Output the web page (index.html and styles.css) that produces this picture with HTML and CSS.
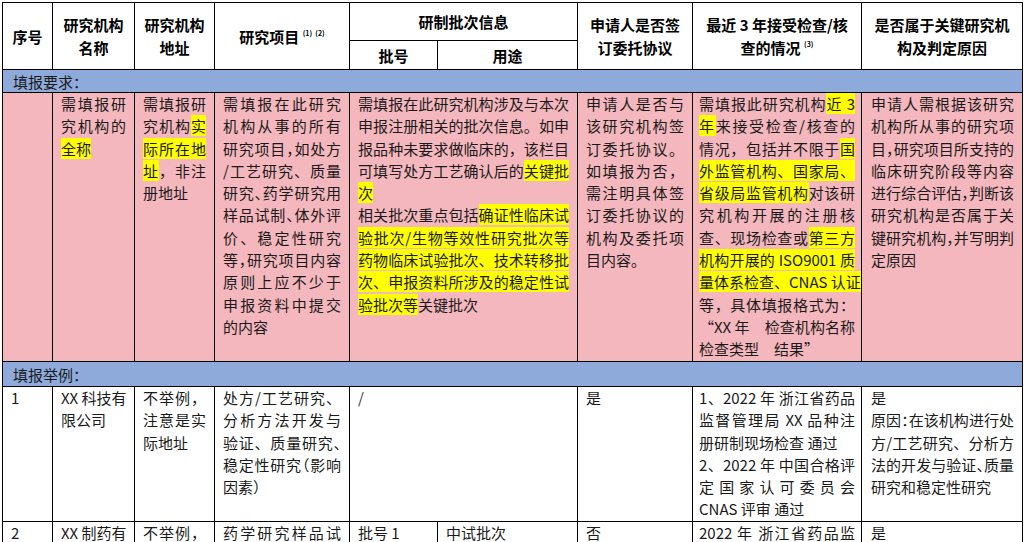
FILE: index.html
```html
<!DOCTYPE html>
<html lang="zh-CN">
<head>
<meta charset="utf-8">
<title>研究机构信息表</title>
<link rel="stylesheet" href="styles.css">
</head>
<body>
<table class="sheet">
<colgroup>
<col class="w1"><col class="w2"><col class="w3"><col class="w4"><col class="w5a"><col class="w5b"><col class="w6"><col class="w7"><col class="w8">
</colgroup>
<thead>
<tr class="h1">
<th rowspan="2">序号</th>
<th rowspan="2">研究机构<br>名称</th>
<th rowspan="2">研究机构<br>地址</th>
<th rowspan="2">研究项目 <sup class="n">(1)&nbsp;&nbsp;(2)</sup></th>
<th colspan="2">研制批次信息</th>
<th rowspan="2">申请人是否签<br>订委托协议</th>
<th rowspan="2">最近 3 年接受检查/核<br>查的情况 <sup class="n">(3)</sup></th>
<th rowspan="2">是否属于关键研究机<br>构及判定原因</th>
</tr>
<tr class="h2"><th>批号</th><th>用途</th></tr>
</thead>
<tbody>
<tr class="sec"><td colspan="9">填报要求：</td></tr>
<tr class="req">
<td></td>
<td><div class="l">需填报研</div><div class="l">究机构的</div><div class="e"><mark>全称</mark></div></td>
<td><div class="l">需填报研</div><div class="l">究机构<mark>实</mark></div><div class="l"><mark>际所在地</mark></div><div class="l"><mark>址</mark>，非注</div><div class="e">册地址</div></td>
<td>
<div class="l">需填报在此研究</div>
<div class="l">机构从事的所有</div>
<div class="l">研究项目<span class="h">，</span>如处方</div>
<div class="l">/工艺研究、质量</div>
<div class="l">研究<span class="h">、</span>药学研究用</div>
<div class="l">样品试制<span class="h">、</span>体外评</div>
<div class="l">价、稳定性研究</div>
<div class="l">等<span class="h">，</span>研究项目内容</div>
<div class="l">原则上应不少于</div>
<div class="l">申报资料中提交</div>
<div class="e">的内容</div>
</td>
<td colspan="2">
<div class="l">需填报在此研究机构涉及与本次</div>
<div class="l">申报注册相关的批次信息。如申</div>
<div class="l">报品种未要求做临床的，该栏目</div>
<div class="l">可填写处方工艺确认后的<mark>关键批</mark></div>
<div class="e"><mark>次</mark></div>
<div class="l">相关批次重点包括<mark>确证性临床试</mark></div>
<div class="l"><mark>验批次/生物等效性研究批次等</mark></div>
<div class="l"><mark>药物临床试验批次、技术转移批</mark></div>
<div class="l"><mark>次、申报资料所涉及的稳定性试</mark></div>
<div class="e"><mark>验批次等</mark>关键批次</div>
</td>
<td>
<div class="l">申请人是否与</div>
<div class="l">该研究机构签</div>
<div class="l">订委托协议。</div>
<div class="l">如填报为否，</div>
<div class="l">需注明具体签</div>
<div class="l">订委托协议的</div>
<div class="l">机构及委托项</div>
<div class="e">目内容。</div>
</td>
<td class="c7">
<div class="l">需填报此研究机构<mark>近 3</mark></div>
<div class="l"><mark>年</mark>来接受检查/核查的</div>
<div class="l">情况，包括并不限于<mark>国</mark></div>
<div class="l"><mark>外监管机构、国家局、</mark></div>
<div class="l"><mark>省级局监管机构</mark>对该研</div>
<div class="l">究机构开展的注册核</div>
<div class="l">查、现场检查或<mark>第三方</mark></div>
<div class="l"><mark>机构开展的 ISO9001 质</mark></div>
<div class="l"><mark>量体系检查、CNAS 认证</mark></div>
<div class="l">等，具体填报格式为：</div>
<div class="l">“XX 年　检查机构名称</div>
<div class="e">检查类型　结果”</div>
</td>
<td class="c8">
<div class="l">申请人需根据该研究</div>
<div class="l">机构所从事的研究项</div>
<div class="l">目<span class="h">，</span>研究项目所支持的</div>
<div class="l">临床研究阶段等内容</div>
<div class="l">进行综合评估<span class="h">，</span>判断该</div>
<div class="l">研究机构是否属于关</div>
<div class="l">键研究机构<span class="h">，</span>并写明判</div>
<div class="e">定原因</div>
</td>
</tr>
<tr class="sec sec2"><td colspan="9">填报举例：</td></tr>
<tr class="ex1">
<td>1</td>
<td><div class="l">XX 科技有</div><div class="e">限公司</div></td>
<td><div class="l">不举例，</div><div class="l">注意是实</div><div class="e">际地址</div></td>
<td>
<div class="l">处方/工艺研究、</div>
<div class="l">分析方法开发与</div>
<div class="l">验证、质量研究<span class="h">、</span></div>
<div class="l">稳定性研究<span class="h">（</span>影响</div>
<div class="e">因素）</div>
</td>
<td colspan="2"><span class="slash">/</span></td>
<td>是</td>
<td class="c7">
<div class="l">1、2022 年 浙江省药品</div>
<div class="l">监督管理局 XX 品种注</div>
<div class="e">册研制现场检查 通过</div>
<div class="l">2、2022 年 中国合格评</div>
<div class="l">定国家认可委员会</div>
<div class="e">CNAS 评审 通过</div>
</td>
<td class="c8">
<div class="e">是</div>
<div class="l">原因<span class="h">：</span>在该机构进行处</div>
<div class="l">方/工艺研究、分析方</div>
<div class="l">法的开发与验证<span class="h">、</span>质量</div>
<div class="e">研究和稳定性研究</div>
</td>
</tr>
<tr class="ex2">
<td>2</td>
<td><div class="l">XX 制药有</div></td>
<td><div class="l">不举例，</div></td>
<td><div class="l">药学研究样品试</div></td>
<td>批号 1</td>
<td>中试批次</td>
<td>否</td>
<td class="c7"><div class="l">2022 年 浙江省药品监</div></td>
<td class="c8">是</td>
</tr>
</tbody>
</table>
</body>
</html>
```

FILE: styles.css
```css
html, body {
  margin: 0;
  background: #ffffff;
}

body {
  padding: 2px 0 0 2px;
  font-family: "Noto Sans CJK SC", "Noto Sans", sans-serif;
  color: #1a1a1a;
  overflow: hidden;
}

.sheet {
  border-collapse: collapse;
  table-layout: fixed;
  width: 1020px;
  font-size: 15px;
  line-height: 22.3px;
}

.w1 { width: 50px; }
.w2 { width: 82px; }
.w3 { width: 80px; }
.w4 { width: 135px; }
.w5a { width: 88px; }
.w5b { width: 140px; }
.w6 { width: 115px; }
.w7 { width: 169px; }
.w8 { width: 161px; }

th, td {
  border: 1px solid #000;
  padding: 0 8px;
  vertical-align: top;
  text-align: left;
  font-weight: 400;
}

th {
  font-weight: 700;
  color: #000;
  text-align: center;
  vertical-align: middle;
  line-height: 23px;
  padding: 0 4px;
}

.h1 { height: 38px; }
.h2 { height: 29px; }

.n {
  font-size: 7px;
  line-height: 0;
  vertical-align: 7px;
  font-weight: 700;
}

.sec td {
  background: #8eaadb;
  padding: 0 0 0 10px;
  line-height: 21px;
  vertical-align: middle;
}

.sec { height: 23px; }
.sec2 { height: 25px; }

.req { height: 269px; }
.req td { background: #f4b7bd; }

.ex1 { height: 134px; }
.ex2 { height: 60px; }

.c7 { padding-left: 6px; padding-right: 6px; }
.c8 { padding-left: 9px; padding-right: 8px; }

.l {
  text-align: justify;
  text-align-last: justify;
  white-space: nowrap;
}

.e {
  text-align: left;
  white-space: nowrap;
}

.h {
  font-feature-settings: "halt" 1;
}

mark {
  background: #ffff00;
  color: inherit;
}

.slash {
  color: #333;
}
```
